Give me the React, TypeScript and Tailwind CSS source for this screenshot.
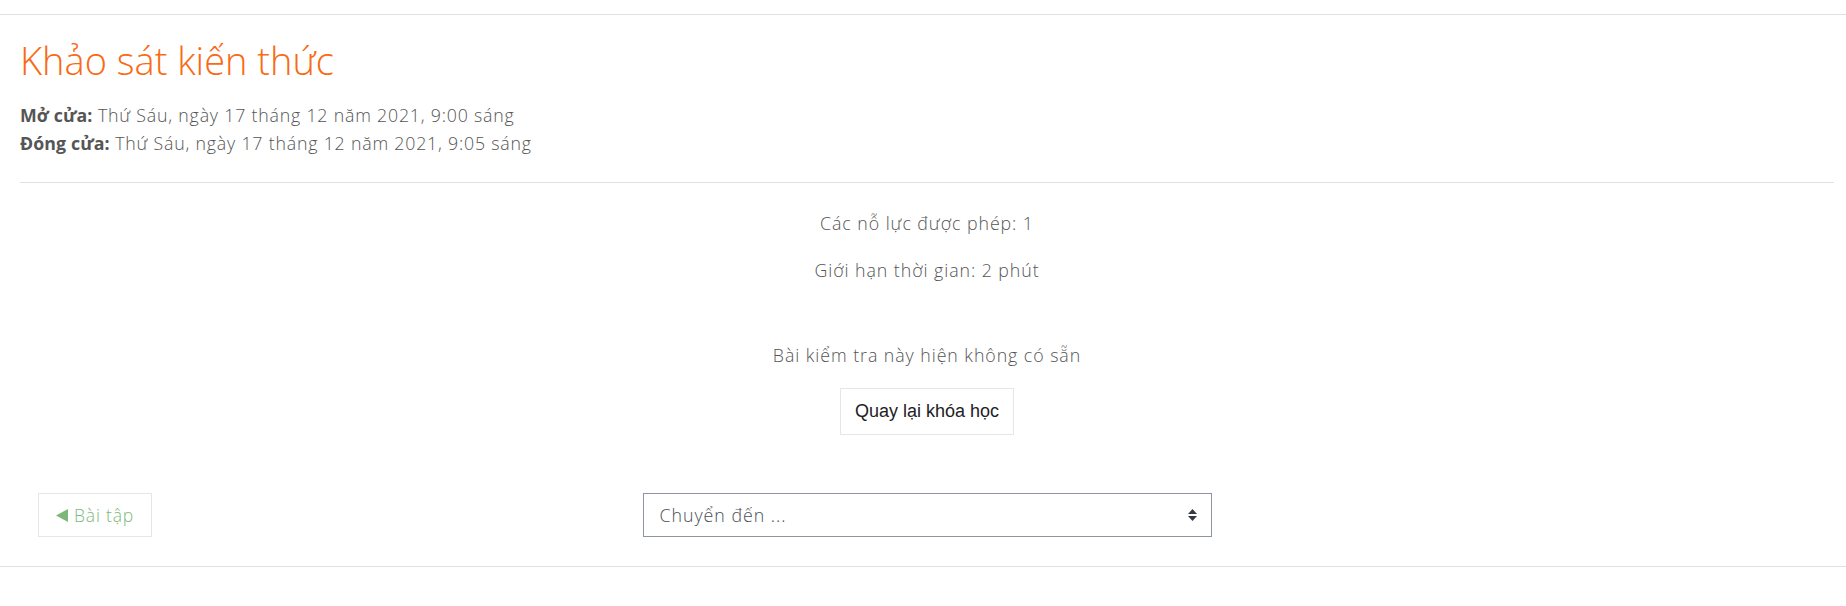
import React from "react"

const font = { fontFamily: "'Open Sans', 'DejaVu Sans', sans-serif" }

export default function App() {
  return (
    <div className="min-h-screen w-full bg-white pt-[14px]" style={font}>
      <div className="border-y border-[#dee2e6]">
        <div className="pl-[20px] pr-[12px]">
          {/* Header */}
          <div className="pt-[23px] pb-[25px] border-b border-[#dee2e6]">
            <h2 className="text-[38px] font-light leading-[45px] text-[#f96a14]">
              Khảo sát kiến thức
            </h2>
            <div className="mt-[18px] text-[17.75px] font-light leading-[28px] tracking-[0.8px] text-[#555]">
              <div>
                <strong className="font-bold tracking-[0.1px]">Mở cửa:</strong> Thứ Sáu, ngày 17 tháng 12 năm 2021, 9:00 sáng
              </div>
              <div>
                <strong className="font-bold tracking-[0.1px]">Đóng cửa:</strong> Thứ Sáu, ngày 17 tháng 12 năm 2021, 9:05 sáng
              </div>
            </div>
          </div>

          {/* Quiz info */}
          <div className="flex flex-col items-center pt-[27px] text-[17.75px] font-light tracking-[0.95px] text-[#555]">
            <p className="leading-[26px]">Các nỗ lực được phép: 1</p>
            <p className="mt-[21px] leading-[26px]">Giới hạn thời gian: 2 phút</p>
            <p className="mt-[59px] leading-[26px]">Bài kiểm tra này hiện không có sẵn</p>
            <button
              type="button"
              className="mt-[20px] h-[47px] w-[174px] border border-[#e6e6e6] bg-white text-[18px] tracking-normal text-[#1d2125]"
              style={{ fontFamily: "'Liberation Sans', Arial, sans-serif" }}
            >
              Quay lại khóa học
            </button>
          </div>

          {/* Activity navigation */}
          <div className="mt-[58px] mb-[29px] flex items-center">
            <div className="flex-1">
              <a className="ml-[18px] inline-flex h-[44px] w-[114px] items-center justify-center border border-[#e6e6e6] text-[17.5px] font-light tracking-[0.8px] text-[#7db87a]">
                <svg className="mr-[6px]" width="12" height="13" viewBox="0 0 12 13">
                  <path d="M0 6.5L12 0v13z" fill="#7db87a" />
                </svg>
                Bài tập
              </a>
            </div>
            <div className="relative flex h-[44px] w-[569px] items-center border border-[#8f959e] pl-[16px] text-[17.75px] font-light tracking-[1px] text-[#495057]">
              Chuyển đến ...
              <svg
                className="absolute right-[14px] top-1/2 -translate-y-1/2"
                width="9"
                height="12"
                viewBox="0 0 9 12"
              >
                <path d="M4.5 0L9 5H0z" fill="#343a40" />
                <path d="M4.5 12L0 7h9z" fill="#343a40" />
              </svg>
            </div>
            <div className="flex-1" />
          </div>
        </div>
      </div>
    </div>
  )
}
